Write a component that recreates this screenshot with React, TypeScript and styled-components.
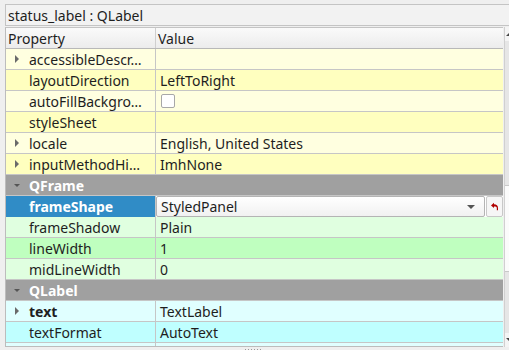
import styled, { createGlobalStyle } from 'styled-components'

const GlobalStyle = createGlobalStyle`
    html, body {
        margin: 0;
        padding: 0;
        background: #efefef;
    }
    body {
        font-family: "Noto Sans", "Open Sans", sans-serif;
        font-size: 14px;
        color: #1e1e1e;
    }
`

const Page = styled.div`
    width: 509px;
    height: 350px;
    overflow: hidden;
    display: flex;
    flex-direction: column;
    background: #efefef;
`

const LabelBar = styled.div`
    margin: 4px 0 0 5px;
    height: 21px;
    width: 520px;
    border-top: 1px solid #c4c4c4;
    border-left: 1px solid #c4c4c4;
    border-bottom: 1px solid #c4c4c4;
    background: #f2f2f2;
    display: flex;
    align-items: center;
    padding-left: 2px;
    white-space: nowrap;
`

const Body = styled.div`
    margin: 1px 0 0 5px;
    height: 320px;
    width: 520px;
    display: flex;
`

const Tree = styled.div`
    width: 497px;
    flex-shrink: 0;
    border-left: 1px solid #bcbcbc;
    border-top: 1px solid #c4c4c4;
    border-bottom: 1px solid #bcbcbc;
    overflow: hidden;
    background: #ffffff;
`

const Header = styled.div`
    display: grid;
    grid-template-columns: 149px 1fr;
    height: 20px;
    background: linear-gradient(#fafafa, #ececec);
    border-bottom: 1px solid #b8b8b8;
`

const HeaderCell = styled.div`
    display: flex;
    align-items: center;
    padding-left: 2px;
    & + & {
        border-left: 1px solid #cfcfcf;
    }
`

const Row = styled.div<{ $bg: string }>`
    display: grid;
    grid-template-columns: 149px 1fr;
    height: 20px;
    background: ${(p) => p.$bg};
    border-bottom: 1px solid #c6c6c6;
`

const NameCell = styled.div<{ $bold?: boolean, $selected?: boolean }>`
    position: relative;
    display: flex;
    align-items: center;
    padding-left: 23px;
    white-space: nowrap;
    overflow: hidden;
    font-weight: ${(p) => (p.$bold ? 'bold' : 'normal')};
    background: ${(p) => (p.$selected ? '#308cc6' : 'transparent')};
    color: ${(p) => (p.$selected ? '#ffffff' : 'inherit')};
`

const ValueCell = styled.div`
    display: flex;
    align-items: center;
    padding-left: 4px;
    border-left: 1px solid #c6c6c6;
    white-space: nowrap;
    overflow: hidden;
`

const GroupRow = styled.div`
    position: relative;
    height: 20px;
    background: #a0a0a0;
    border-bottom: 1px solid #c6c6c6;
    color: #ffffff;
    font-weight: bold;
    display: flex;
    align-items: center;
    padding-left: 23px;
`

const Expander = styled.span<{ $open?: boolean }>`
    position: absolute;
    left: 9px;
    top: 50%;
    width: 0;
    height: 0;
    ${(p) => (p.$open
        ? `
        margin-top: -1px;
        margin-left: -1px;
        border-left: 3px solid transparent;
        border-right: 3px solid transparent;
        border-top: 3px solid #555;
    `
        : `
        margin-top: -4px;
        border-top: 4px solid transparent;
        border-bottom: 4px solid transparent;
        border-left: 4px solid #6a6a6a;
    `)}
`

const CheckBox = styled.span`
    width: 12px;
    height: 12px;
    margin-left: 1px;
    border: 1px solid #a8a8a8;
    border-radius: 2px;
    background: #ffffff;
`

const EditorCell = styled.div`
    display: flex;
    border-left: 1px solid #c6c6c6;
    background: #ffffff;
`

const Combo = styled.div`
    flex: 1;
    display: flex;
    align-items: center;
    justify-content: space-between;
    padding: 0 9px 0 4px;
    margin: 0 1px 0 0;
    border: 1px solid #b4b4b4;
    border-radius: 2px;
    background: linear-gradient(#ffffff, #f1f1f1);
`

const ComboArrow = styled.span`
    width: 0;
    height: 0;
    border-left: 4px solid transparent;
    border-right: 4px solid transparent;
    border-top: 4px solid #555;
`

const ResetButton = styled.div`
    width: 15px;
    display: flex;
    align-items: center;
    justify-content: center;
    border: 1px solid #c8c8c8;
    border-radius: 2px;
    background: #f6f6f6;
`

const Scrollbar = styled.div`
    width: 16px;
    flex-shrink: 0;
    margin-left: 1px;
    display: flex;
    flex-direction: column;
    background: #e4e4e4;
    border-left: 1px solid #d0d0d0;
`

const ScrollArrow = styled.div<{ $down?: boolean }>`
    height: 14px;
    display: flex;
    align-items: center;
    padding-left: 1px;
    background: #f4f4f4;
    &::before {
        content: '';
        width: 0;
        height: 0;
        border-left: 4px solid transparent;
        border-right: 4px solid transparent;
        ${(p) => (p.$down ? 'border-top: 4px solid #444;' : 'border-bottom: 4px solid #444;')}
    }
`

const Track = styled.div<{ $grow: number, $handle?: boolean }>`
    flex: ${(p) => p.$grow};
    background: ${(p) => (p.$handle ? '#fbfbfb' : '#e6e6e6')};
    border-top: ${(p) => (p.$handle ? '1px solid #c8c8c8' : 'none')};
    border-bottom: ${(p) => (p.$handle ? '1px solid #c8c8c8' : 'none')};
`

const Grip = styled.div`
    margin: 2px 0 0 245px;
    width: 16px;
    height: 1px;
    background: repeating-linear-gradient(90deg, #9a9a9a 0 1px, transparent 1px 3px);
`

const YELLOW = '#ffffe0'
const YELLOW_DARK = '#ffffbf'
const GREEN = '#e0ffe0'
const GREEN_DARK = '#bfffbf'
const CYAN = '#e0ffff'
const CYAN_DARK = '#bfffff'

const ResetIcon = (): JSX.Element => (
    <svg width="9" height="9" viewBox="0 0 9 9">
        <path d="M1 3.5 L4 0.8 L4 2.3 C6.5 2.3 8 3.6 8 6 L8 8.3 L6.8 8.3 L6.8 6 C6.8 4.7 5.8 4.4 4 4.4 L4 6 Z" fill="#b00000" />
    </svg>
)

const App = (): JSX.Element => {
    return (
        <Page>
            <GlobalStyle />
            <LabelBar>status_label : QLabel</LabelBar>
            <Body>
                <Tree>
                    <Header>
                        <HeaderCell>Property</HeaderCell>
                        <HeaderCell>Value</HeaderCell>
                    </Header>

                    <Row $bg={YELLOW}>
                        <NameCell><Expander />accessibleDescr…</NameCell>
                        <ValueCell />
                    </Row>
                    <Row $bg={YELLOW_DARK}>
                        <NameCell>layoutDirection</NameCell>
                        <ValueCell>LeftToRight</ValueCell>
                    </Row>
                    <Row $bg={YELLOW}>
                        <NameCell>autoFillBackgro…</NameCell>
                        <ValueCell><CheckBox /></ValueCell>
                    </Row>
                    <Row $bg={YELLOW_DARK}>
                        <NameCell>styleSheet</NameCell>
                        <ValueCell />
                    </Row>
                    <Row $bg={YELLOW}>
                        <NameCell><Expander />locale</NameCell>
                        <ValueCell>English, United States</ValueCell>
                    </Row>
                    <Row $bg={YELLOW_DARK}>
                        <NameCell><Expander />inputMethodHi…</NameCell>
                        <ValueCell>ImhNone</ValueCell>
                    </Row>

                    <GroupRow><Expander $open />QFrame</GroupRow>
                    <Row $bg={GREEN_DARK}>
                        <NameCell $bold $selected>frameShape</NameCell>
                        <EditorCell>
                            <Combo>StyledPanel<ComboArrow /></Combo>
                            <ResetButton><ResetIcon /></ResetButton>
                        </EditorCell>
                    </Row>
                    <Row $bg={GREEN}>
                        <NameCell>frameShadow</NameCell>
                        <ValueCell>Plain</ValueCell>
                    </Row>
                    <Row $bg={GREEN_DARK}>
                        <NameCell>lineWidth</NameCell>
                        <ValueCell>1</ValueCell>
                    </Row>
                    <Row $bg={GREEN}>
                        <NameCell>midLineWidth</NameCell>
                        <ValueCell>0</ValueCell>
                    </Row>

                    <GroupRow><Expander $open />QLabel</GroupRow>
                    <Row $bg={CYAN}>
                        <NameCell $bold><Expander />text</NameCell>
                        <ValueCell>TextLabel</ValueCell>
                    </Row>
                    <Row $bg={CYAN_DARK}>
                        <NameCell>textFormat</NameCell>
                        <ValueCell>AutoText</ValueCell>
                    </Row>
                    <Row $bg={CYAN}>
                        <NameCell />
                        <ValueCell />
                    </Row>
                </Tree>
                <Scrollbar>
                    <ScrollArrow />
                    <Track $grow={150} />
                    <Track $grow={89} $handle />
                    <Track $grow={64} />
                    <ScrollArrow $down />
                </Scrollbar>
            </Body>
            <Grip />
        </Page>
    )
}

export default App
